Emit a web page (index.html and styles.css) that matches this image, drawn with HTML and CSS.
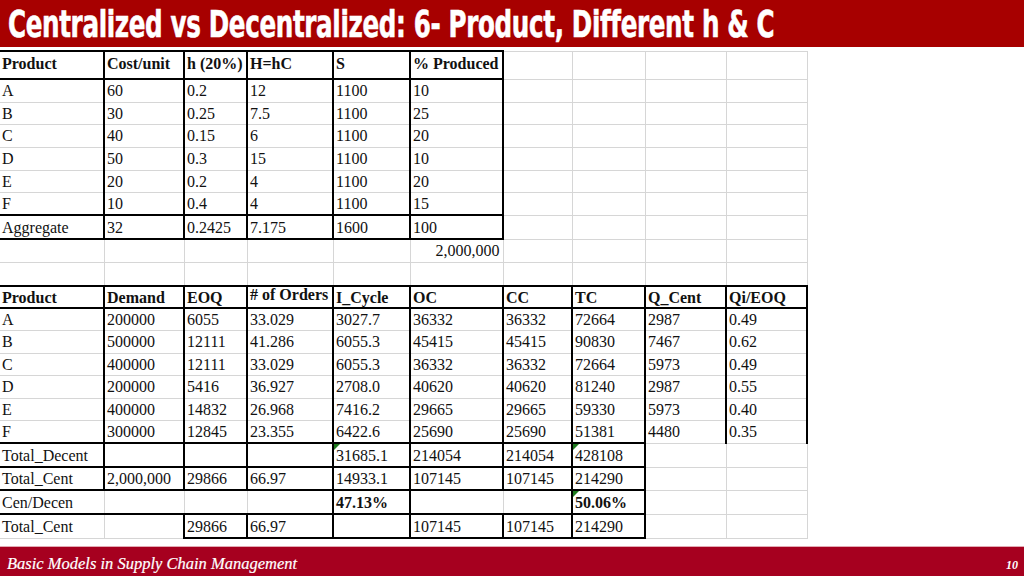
FILE: index.html
```html
<!DOCTYPE html>
<html>
<head>
<meta charset="utf-8">
<link rel="stylesheet" href="styles.css">
</head>
<body>
<div class="title"><span class="title-text">Centralized vs Decentralized: 6- Product, Different h &amp; C</span></div>
<table class="sheet">
<colgroup>
<col class="w104"><col class="w80"><col class="w63"><col class="w86"><col class="w77"><col class="w93"><col class="w69"><col class="w73"><col class="w81"><col class="w81">
</colgroup>
<tr class="h28 hd"><td class="k">Product</td><td class="k">Cost/unit</td><td class="k">h (20%)</td><td class="k">H=hC</td><td class="k">S</td><td class="k">% Produced</td><td></td><td></td><td></td><td></td></tr>
<tr class="h23"><td class="v">A</td><td class="v">60</td><td class="v">0.2</td><td class="v">12</td><td class="v">1100</td><td class="v">10</td><td></td><td></td><td></td><td></td></tr>
<tr class="h22"><td class="v">B</td><td class="v">30</td><td class="v">0.25</td><td class="v">7.5</td><td class="v">1100</td><td class="v">25</td><td></td><td></td><td></td><td></td></tr>
<tr class="h23"><td class="v">C</td><td class="v">40</td><td class="v">0.15</td><td class="v">6</td><td class="v">1100</td><td class="v">20</td><td></td><td></td><td></td><td></td></tr>
<tr class="h23"><td class="v">D</td><td class="v">50</td><td class="v">0.3</td><td class="v">15</td><td class="v">1100</td><td class="v">10</td><td></td><td></td><td></td><td></td></tr>
<tr class="h22"><td class="v">E</td><td class="v">20</td><td class="v">0.2</td><td class="v">4</td><td class="v">1100</td><td class="v">20</td><td></td><td></td><td></td><td></td></tr>
<tr class="h23"><td class="v">F</td><td class="v">10</td><td class="v">0.4</td><td class="v">4</td><td class="v">1100</td><td class="v">15</td><td></td><td></td><td></td><td></td></tr>
<tr class="h24"><td class="k">Aggregate</td><td class="k">32</td><td class="k">0.2425</td><td class="k">7.175</td><td class="k">1600</td><td class="k">100</td><td></td><td></td><td></td><td></td></tr>
<tr class="h23"><td></td><td></td><td></td><td></td><td></td><td class="ra">2,000,000</td><td></td><td></td><td></td><td></td></tr>
<tr class="h24"><td></td><td></td><td></td><td></td><td></td><td></td><td></td><td></td><td></td><td></td></tr>
<tr class="h22 hd"><td class="k">Product</td><td class="k">Demand</td><td class="k">EOQ</td><td class="k up">#&nbsp;of Orders</td><td class="k">I_Cycle</td><td class="k">OC</td><td class="k">CC</td><td class="k">TC</td><td class="k">Q_Cent</td><td class="k">Qi/EOQ</td></tr>
<tr class="h22"><td class="v">A</td><td class="v">200000</td><td class="v">6055</td><td class="v">33.029</td><td class="v">3027.7</td><td class="v">36332</td><td class="v">36332</td><td class="v">72664</td><td class="v">2987</td><td class="v">0.49</td></tr>
<tr class="h23"><td class="v">B</td><td class="v">500000</td><td class="v">12111</td><td class="v">41.286</td><td class="v">6055.3</td><td class="v">45415</td><td class="v">45415</td><td class="v">90830</td><td class="v">7467</td><td class="v">0.62</td></tr>
<tr class="h22"><td class="v">C</td><td class="v">400000</td><td class="v">12111</td><td class="v">33.029</td><td class="v">6055.3</td><td class="v">36332</td><td class="v">36332</td><td class="v">72664</td><td class="v">5973</td><td class="v">0.49</td></tr>
<tr class="h23"><td class="v">D</td><td class="v">200000</td><td class="v">5416</td><td class="v">36.927</td><td class="v">2708.0</td><td class="v">40620</td><td class="v">40620</td><td class="v">81240</td><td class="v">2987</td><td class="v">0.55</td></tr>
<tr class="h22"><td class="v">E</td><td class="v">400000</td><td class="v">14832</td><td class="v">26.968</td><td class="v">7416.2</td><td class="v">29665</td><td class="v">29665</td><td class="v">59330</td><td class="v">5973</td><td class="v">0.40</td></tr>
<tr class="h23"><td class="v">F</td><td class="v">300000</td><td class="v">12845</td><td class="v">23.355</td><td class="v">6422.6</td><td class="v">25690</td><td class="v">25690</td><td class="v">51381</td><td class="v">4480</td><td class="v">0.35</td></tr>
<tr class="h24"><td class="k">Total_Decent</td><td class="k"></td><td class="k"></td><td class="k"></td><td class="k note">31685.1</td><td class="k">214054</td><td class="k">214054</td><td class="k note">428108</td><td></td><td></td></tr>
<tr class="h23"><td class="k">Total_Cent</td><td class="k">2,000,000</td><td class="k">29866</td><td class="k">66.97</td><td class="k">14933.1</td><td class="k">107145</td><td class="k">107145</td><td class="k">214290</td><td></td><td></td></tr>
<tr class="h24"><td class="h">Cen/Decen</td><td class="h"></td><td class="h"></td><td class="h"></td><td class="k b">47.13%</td><td class="h"></td><td class="h"></td><td class="k b note">50.06%</td><td></td><td></td></tr>
<tr class="h24"><td class="tp">Total_Cent</td><td class="tp"></td><td class="k">29866</td><td class="k">66.97</td><td class="k"></td><td class="k">107145</td><td class="k">107145</td><td class="k">214290</td><td></td><td></td></tr>
</table>
<div class="foot"><span class="foot-text">Basic Models in Supply Chain Management</span><span class="page">10</span></div>
</body>
</html>
```

FILE: styles.css
```css
* { box-sizing: border-box; }
html, body { margin: 0; padding: 0; }
body {
  width: 1024px;
  height: 576px;
  overflow: hidden;
  background: #fff;
  display: flex;
  flex-direction: column;
  font-family: "Liberation Serif", "Times New Roman", serif;
  color: #111;
}
.title {
  height: 47px;
  flex: none;
  background: #a70000;
  overflow: hidden;
  padding-left: 8px;
}
.title-text {
  display: inline-block;
  white-space: nowrap;
  color: #fff;
  font-family: "DejaVu Sans Condensed", "DejaVu Sans", sans-serif;
  font-weight: bold;
  font-size: 38px;
  line-height: 49px;
  letter-spacing: -0.5px;
  -webkit-text-stroke: 0.6px #fff;
  transform: scaleX(0.72);
  transform-origin: left center;
}
.sheet {
  flex: none;
  margin-top: 3px;
  border-collapse: collapse;
  table-layout: fixed;
  width: 807px;
}
.w104 { width: 104px; }
.w80 { width: 80px; }
.w63 { width: 63px; }
.w86 { width: 86px; }
.w77 { width: 77px; }
.w93 { width: 93px; }
.w69 { width: 69px; }
.w73 { width: 73px; }
.w81 { width: 81px; }
.sheet td {
  border: 1px solid #d6d6d6;
  padding: 1px 0 0 2px;
  font-size: 16px;
  line-height: 16px;
  white-space: nowrap;
  overflow: hidden;
  vertical-align: middle;
}
.h22 td { height: 22px; }
.h23 td { height: 23px; }
.h24 td { height: 24px; }
.h28 td { height: 28px; }
.h28 td { padding-bottom: 3px; }
.hd td { font-weight: bold; }
.sheet td.k { border: 2px solid #000; }
.sheet td.v { border-left: 2px solid #000; border-right: 2px solid #000; }
.sheet td.h { border-top: 2px solid #000; border-bottom: 2px solid #000; }
.sheet td.tp { border-top: 2px solid #000; }
.sheet td:first-child { border-left: 0; }
.sheet td.ra { text-align: right; padding-right: 3px; }
.sheet td.b { font-weight: bold; }
.sheet td.up { vertical-align: top; padding-top: 0; overflow: visible; }
.sheet td.note { position: relative; }
.sheet td.note::before {
  content: "";
  position: absolute;
  left: 0;
  top: 0;
  border-top: 6px solid #1f7a1f;
  border-right: 6px solid transparent;
}
.foot {
  margin-top: auto;
  flex: none;
  height: 30px;
  background: #a6001f;
  border-top: 1px solid #e2aab3;
  display: flex;
  align-items: center;
  justify-content: space-between;
  padding: 4px 6px 0 7px;
  color: #fff;
  font-style: italic;
}
.foot-text {
  font-size: 16.5px;
  font-family: "Liberation Serif", serif;
  -webkit-text-stroke: 0.2px #fff;
}
.page {
  font-size: 12px;
  font-weight: bold;
  font-family: "Liberation Serif", serif;
  padding-top: 3px;
}
```
